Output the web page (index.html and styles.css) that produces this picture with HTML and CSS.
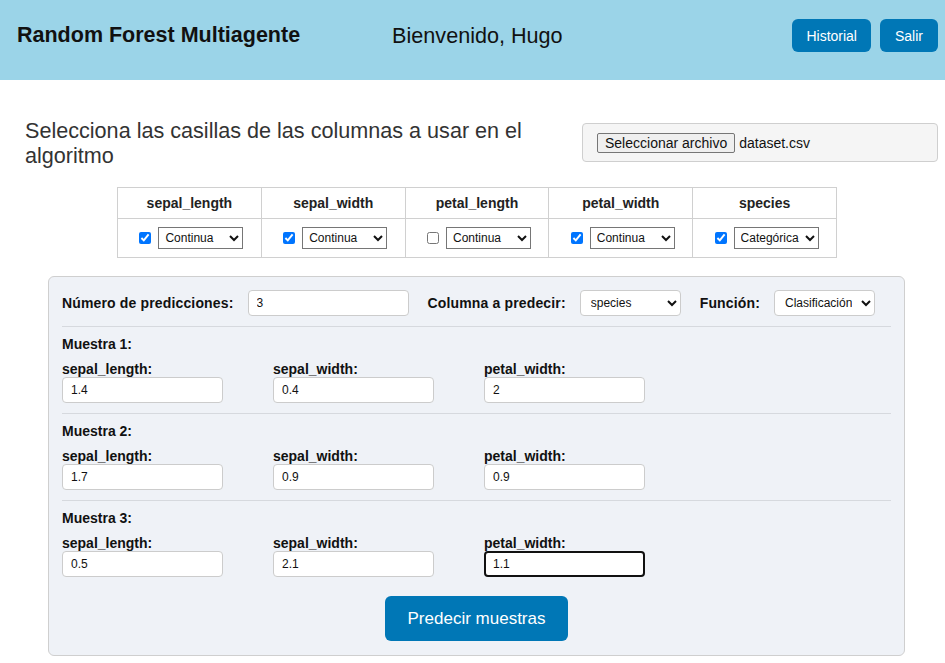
FILE: index.html
```html
<!DOCTYPE html>
<html lang="es">
<head>
<meta charset="utf-8">
<title>Random Forest Multiagente</title>
<link rel="stylesheet" href="styles.css">
</head>
<body>
<header class="topbar">
  <h1 class="brand">Random Forest Multiagente</h1>
  <span class="welcome">Bienvenido, Hugo</span>
  <nav class="actions">
    <button class="btn-nav">Historial</button>
    <button class="btn-nav btn-wide">Salir</button>
  </nav>
</header>

<main class="page">
  <section class="intro">
    <h2 class="intro-text">Selecciona las casillas de las columnas a usar en el algoritmo</h2>
    <div class="file-box">
      <button class="file-btn">Seleccionar archivo</button>
      <span class="file-name">dataset.csv</span>
    </div>
  </section>

  <table class="cols">
    <thead>
      <tr>
        <th>sepal_length</th>
        <th>sepal_width</th>
        <th>petal_length</th>
        <th>petal_width</th>
        <th>species</th>
      </tr>
    </thead>
    <tbody>
      <tr>
        <td><input type="checkbox" checked><select class="type-sel"><option>Continua</option></select></td>
        <td><input type="checkbox" checked><select class="type-sel"><option>Continua</option></select></td>
        <td><input type="checkbox"><select class="type-sel"><option>Continua</option></select></td>
        <td><input type="checkbox" checked><select class="type-sel"><option>Continua</option></select></td>
        <td><input type="checkbox" checked><select class="type-sel"><option>Categórica</option></select></td>
      </tr>
    </tbody>
  </table>

  <section class="panel">
    <div class="top-row">
      <div class="group">
        <label class="lbl">Número de predicciones:</label>
        <input class="field" type="text" value="3">
      </div>
      <div class="group">
        <label class="lbl">Columna a predecir:</label>
        <select class="field-sel"><option>species</option></select>
      </div>
      <div class="group">
        <label class="lbl">Función:</label>
        <select class="field-sel"><option>Clasificación</option></select>
      </div>
    </div>

    <div class="sample">
      <div class="sample-title">Muestra 1:</div>
      <div class="sample-fields">
        <div class="sf"><label class="sf-lbl">sepal_length:</label><input class="field" type="text" value="1.4"></div>
        <div class="sf"><label class="sf-lbl">sepal_width:</label><input class="field" type="text" value="0.4"></div>
        <div class="sf"><label class="sf-lbl">petal_width:</label><input class="field" type="text" value="2"></div>
      </div>
    </div>

    <div class="sample">
      <div class="sample-title">Muestra 2:</div>
      <div class="sample-fields">
        <div class="sf"><label class="sf-lbl">sepal_length:</label><input class="field" type="text" value="1.7"></div>
        <div class="sf"><label class="sf-lbl">sepal_width:</label><input class="field" type="text" value="0.9"></div>
        <div class="sf"><label class="sf-lbl">petal_width:</label><input class="field" type="text" value="0.9"></div>
      </div>
    </div>

    <div class="sample last">
      <div class="sample-title">Muestra 3:</div>
      <div class="sample-fields">
        <div class="sf"><label class="sf-lbl">sepal_length:</label><input class="field" type="text" value="0.5"></div>
        <div class="sf"><label class="sf-lbl">sepal_width:</label><input class="field" type="text" value="2.1"></div>
        <div class="sf"><label class="sf-lbl">petal_width:</label><input class="field focused" type="text" value="1.1"></div>
      </div>
    </div>

    <div class="submit-row">
      <button class="btn-submit">Predecir muestras</button>
    </div>
  </section>
</main>
</body>
</html>
```

FILE: styles.css
```css
* { box-sizing: border-box; }

body {
  margin: 0;
  font-family: "Liberation Sans", Arial, sans-serif;
  color: #111;
  background: #fff;
}

.topbar {
  display: flex;
  align-items: center;
  background: #9bd4e8;
  padding: 19px 7px 28px 17px;
  height: 80px;
}

.brand {
  margin: 0;
  font-size: 21.5px;
  font-weight: bold;
  color: #111;
}

.welcome {
  margin-left: 92px;
  font-size: 21.6px;
  color: #111;
}

.actions {
  margin-left: auto;
  display: flex;
  gap: 9px;
}

.btn-nav {
  height: 33px;
  padding: 0 14px;
  border: none;
  border-radius: 6px;
  background: #0077b6;
  color: #fff;
  font-family: "Liberation Sans", Arial, sans-serif;
  font-size: 14px;
}

.btn-wide {
  padding: 0 15px;
}

.intro {
  display: flex;
  align-items: flex-start;
  padding: 38px 7px 0 25px;
}

.intro-text {
  margin: 0;
  width: 530px;
  font-size: 21.6px;
  line-height: 25px;
  font-weight: normal;
  color: #333;
}

.file-box {
  margin-left: auto;
  margin-top: 5px;
  width: 356px;
  height: 39px;
  display: flex;
  align-items: center;
  padding: 0 15px 0 14px;
  background: #f5f5f5;
  border: 1px solid #cfcfcf;
  border-radius: 4px;
}

.file-btn {
  height: 20px;
  padding: 0 7px;
  background: #efefef;
  border: 1px solid #767676;
  border-radius: 2px;
  font-family: "Liberation Sans", Arial, sans-serif;
  font-size: 14px;
  color: #111;
}

.file-name {
  margin-left: 4px;
  font-size: 14px;
  color: #111;
}

.cols {
  margin: 19px 0 0 117px;
  width: 720px;
  table-layout: fixed;
  border-collapse: collapse;
}

.cols th,
.cols td {
  border: 1px solid #d0d0d0;
  text-align: center;
}

.cols th {
  height: 31px;
  font-size: 14px;
  font-weight: bold;
  color: #222;
  padding: 0;
}

.cols td {
  height: 39px;
  padding: 0;
}

.cols input[type="checkbox"] {
  width: 12px;
  height: 12px;
  margin: 0 7px 0 4px;
  vertical-align: middle;
}

.type-sel {
  height: 22px;
  width: 85px;
  vertical-align: middle;
  font-family: "Liberation Sans", Arial, sans-serif;
  font-size: 12px;
  color: #111;
  background: #fff;
  border: 1px solid #767676;
  border-radius: 0;
  padding: 0 2px;
}

.panel {
  margin: 18px 0 7px 48px;
  width: 857px;
  background: #eff2f7;
  border: 1px solid #cfcfcf;
  border-radius: 6px;
  padding: 13px 13px 14px 13px;
}

.top-row {
  display: flex;
  align-items: center;
  gap: 19px;
  padding-bottom: 10px;
  border-bottom: 1px solid #d6d9de;
}

.group {
  display: flex;
  align-items: center;
}

.lbl {
  font-size: 14px;
  font-weight: bold;
  letter-spacing: 0.15px;
  color: #111;
  margin-right: 14px;
}

.field {
  width: 161px;
  height: 26px;
  padding: 0 8px;
  background: #fff;
  border: 1px solid #cccccc;
  border-radius: 4px;
  font-family: "Liberation Sans", Arial, sans-serif;
  font-size: 12px;
  color: #111;
  outline: none;
}

.field.focused {
  border: 2px solid #111;
  padding: 0 7px;
}

.field-sel {
  width: 101px;
  height: 26px;
  padding: 0 6px;
  background: #fff;
  border: 1px solid #cccccc;
  border-radius: 4px;
  font-family: "Liberation Sans", Arial, sans-serif;
  font-size: 12px;
  color: #111;
}

.sample {
  padding: 9px 0 10px;
  border-bottom: 1px solid #d6d9de;
}

.sample.last {
  border-bottom: none;
  padding-bottom: 0;
}

.sample-title {
  font-size: 14px;
  line-height: 16px;
  font-weight: bold;
  color: #111;
  margin-bottom: 9px;
}

.sample-fields {
  display: flex;
  gap: 50px;
}

.sf {
  display: flex;
  flex-direction: column;
  width: 161px;
}

.sf-lbl {
  font-size: 14px;
  line-height: 16px;
  font-weight: bold;
  color: #111;
}

.submit-row {
  display: flex;
  justify-content: center;
  padding-top: 19px;
}

.btn-submit {
  width: 183px;
  height: 45px;
  border: none;
  border-radius: 6px;
  background: #0077b6;
  color: #fff;
  font-family: "Liberation Sans", Arial, sans-serif;
  font-size: 17px;
}
```
